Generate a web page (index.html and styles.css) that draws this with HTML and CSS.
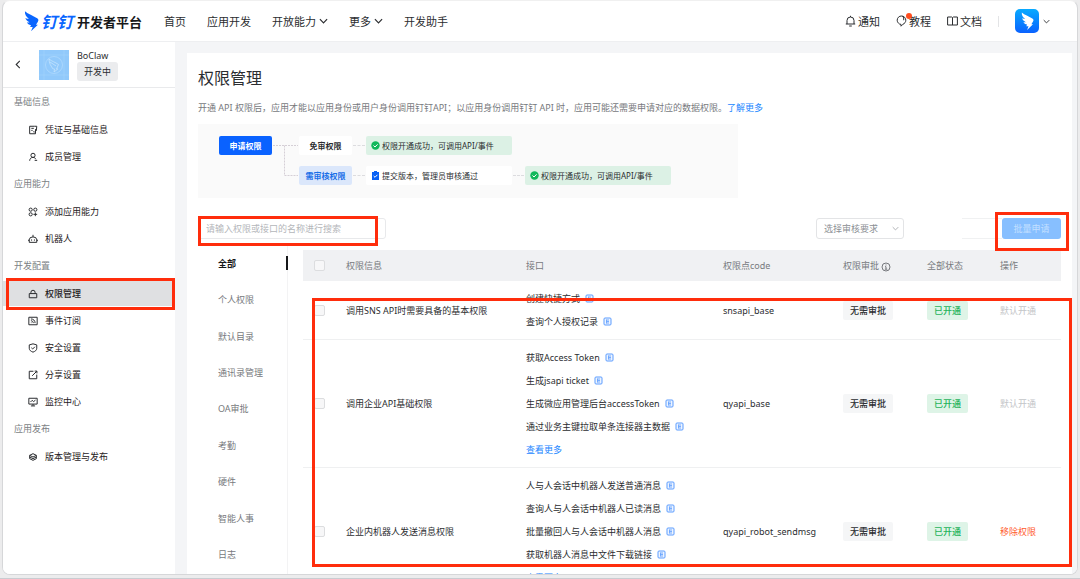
FILE: index.html
```html
<!DOCTYPE html>
<html lang="zh-CN">
<head>
<meta charset="UTF-8" />
<meta name="viewport" content="width=device-width, initial-scale=1" />
<title>权限管理 - 钉钉开发者平台</title>
<link rel="stylesheet" href="styles.css">
</head>
<body>

<!-- Shared icons -->
<svg class="sprite" aria-hidden="true">
  <symbol id="bird" viewBox="0 0 16 22">
    <path d="M1 .5C4.500 3.500 9.500 5 14 8c1.800 1.200 1.500 2.500.8 3.700L12.800 15h2L7.500 22l1.800-4.600H6.500l1-2C5.300 15 3.800 13.800 3 12.200c1 .3 2 .4 3 .2C3.600 11.300 2 9.700 1.400 7.700c1.300.6 2.600.9 3.800.9C2.500 6.600.6 4 1 .5z" fill="currentColor"/>
  </symbol>
  <symbol id="chevron" viewBox="0 0 10 6">
    <path d="M1 1l4 4 4-4" fill="none" stroke="currentColor" stroke-width="1.300"/>
  </symbol>
  <symbol id="doc" viewBox="0 0 9 9">
    <rect x="1" y="1" width="7" height="7" rx="1" fill="#edf4ff" stroke="#5c9dff"/>
    <path d="M3.500 2.500v4M3.500 3h2.500M3.500 4.500h2.500M3.500 6h2.500" fill="none" stroke="#5c9dff" stroke-width=".8"/>
  </symbol>
  <symbol id="check" viewBox="0 0 9 9">
    <circle cx="4.500" cy="4.500" r="4.200" fill="#12b85c"/>
    <path d="M2.500 4.500L4 6l2.600-2.700" fill="none" stroke="#fff" stroke-width="1"/>
  </symbol>
</svg>

<div class="window">
  <header class="topbar">
    <a class="brand" href="#">
      <svg class="brand-bird"><use href="#bird"/></svg>
      <span class="brand-name">钉钉</span>
      <span class="brand-sub">开发者平台</span>
    </a>
    <nav class="topnav">
      <a href="#">首页</a>
      <a href="#">应用开发</a>
      <a href="#">开放能力<svg class="chev"><use href="#chevron"/></svg></a>
      <a href="#">更多<svg class="chev"><use href="#chevron"/></svg></a>
      <a href="#">开发助手</a>
    </nav>
    <div class="tools">
      <a href="#">
        <svg class="tool-icon" viewBox="0 0 11 12"><path d="M.8 9h9.400M2 9V5.500a3.500 3.500 0 0 1 7 0V9M5.500 2V.8M4.200 11h2.600" /></svg>通知
      </a>
      <a href="#" class="has-dot">
        <svg class="tool-icon" viewBox="0 0 11 12"><path d="M3.500 9C2 8 1.200 6.700 1.200 5.200A4.200 4.200 0 0 1 5.500 1a4.200 4.200 0 0 1 4.300 4.200c0 2-1.200 3.300-2.800 4L5 11.200V9.400zM6.500 1.200c1.200 1 1.600 2.500 1 4"/></svg>教程
      </a>
      <a href="#">
        <svg class="tool-icon" viewBox="0 0 11 12"><path d="M.6 2h4l.9.6.9-.6h4v8H.6zM5.500 2.600V10"/></svg>文档
      </a>
      <span class="tools-line"></span>
      <button class="account" aria-label="账号">
        <span class="avatar"><svg><use href="#bird"/></svg></span>
        <svg class="chev-sm"><use href="#chevron"/></svg>
      </button>
    </div>
  </header>

  <div class="layout">
    <aside class="sidebar">
      <div class="app">
        <button class="back" aria-label="返回">
          <svg viewBox="0 0 6 10"><path d="M5 1L1 5l4 4" fill="none" stroke="currentColor" stroke-width="1.200"/></svg>
        </button>
        <div class="app-logo">
          <svg viewBox="0 0 30 30">
            <path d="M5 0v30M25 0v30M0 5h30M0 25h30" stroke="#a6d5fc" stroke-width=".6"/>
            <circle cx="15" cy="15" r="8.500" fill="none" stroke="#b3dbfd" stroke-width=".7"/>
            <path d="M10 9c3 2.500 6 3 9.500 5.500L17.500 19h1.300L15 22l.6-3h-1.400C12 16.500 10 13 10 9zM11 12l6 4" fill="none" stroke="#c4e3fd" stroke-width=".8"/>
          </svg>
        </div>
        <div class="app-info">
          <span class="app-name">BoClaw</span>
          <span class="app-state">开发中</span>
        </div>
      </div>

      <nav class="menu">
        <h2>基础信息</h2>
        <a href="#"><svg viewBox="0 0 12 12"><path d="M8 1.500H2v9h7V5M4 4h3M4 6.500h1.500M8 1.500h2.500L10 7M6.500 8h1v1"/></svg>凭证与基础信息</a>
        <a href="#"><svg viewBox="0 0 12 12"><circle cx="6" cy="4" r="2.500"/><path d="M2 10.500c.2-2.500 1.500-4 4-4 1.800 0 2.800.8 3.200 2M8 10h3"/></svg>成员管理</a>
        <h2>应用能力</h2>
        <a href="#"><svg viewBox="0 0 12 12"><circle cx="3.200" cy="3.200" r="1.900"/><circle cx="8.800" cy="3.200" r="1.900"/><circle cx="3.200" cy="8.800" r="1.900"/><path d="M8.800 6.500v4.500M6.500 8.800H11"/></svg>添加应用能力</a>
        <a href="#"><svg viewBox="0 0 12 12"><path d="M1.500 7a4.500 3.500 0 0 1 9 0v3h-9zM6 3.500V1M0 7.500h1.500M10.500 7.500H12M4.300 6.500v1.500M7.700 6.500v1.500"/></svg>机器人</a>
        <h2>开发配置</h2>
        <a href="#" class="active"><svg viewBox="0 0 12 12"><path d="M1.500 5.500h9v5h-9zM3.500 5.500V4a2.500 2.500 0 0 1 5 0v1.500"/></svg>权限管理<span class="mark mark-menu"></span></a>
        <a href="#"><svg viewBox="0 0 12 12"><path d="M1 1.500h10v9H1zM3.500 3.500c3 0 5 2 5 5M3.500 5.700c1.700 0 2.800 1.100 2.800 2.800M3.500 8h.6"/></svg>事件订阅</a>
        <a href="#"><svg viewBox="0 0 12 12"><path d="M6 1l4.500 1.300v4C10.500 8.800 8.500 10 6 11 3.500 10 1.500 8.800 1.500 6.300v-4zM4 5.700l1.600 1.500L8.300 4.500"/></svg>安全设置</a>
        <a href="#"><svg viewBox="0 0 12 12"><path d="M6.500 1.500h-5v9h9v-5M5 7l5.500-5.500M8 1.300h2.700V4"/></svg>分享设置</a>
        <a href="#"><svg viewBox="0 0 12 12"><path d="M1 1.500h10v7H1zM6 8.500v2M3.500 10.700h5M3 6l2-2 1.700 1.500L9 3.700"/></svg>监控中心</a>
        <h2>应用发布</h2>
        <a href="#"><svg viewBox="0 0 12 12"><path d="M6 2l4 2-4 2-4-2zM2 6l4 2 4-2M2 8l4 2 4-2M2 4v4M10 4v4"/></svg>版本管理与发布</a>
      </nav>
    </aside>

    <main class="content">
      <h1>权限管理</h1>
      <p class="desc">开通 API 权限后，应用才能以应用身份或用户身份调用钉钉API；以应用身份调用钉钉 API 时，应用可能还需要申请对应的数据权限。<a href="#">了解更多</a></p>

      <!-- Application flow -->
      <section class="flow">
        <span class="node node-start">申请权限</span>
        <svg class="elbow" viewBox="0 0 27 49" preserveAspectRatio="none"><path d="M1 9.500h25M12.500 9.500v30H26"/></svg>
        <span class="node">免审权限</span>
        <i class="dash"></i>
        <span class="node node-text node-done"><svg><use href="#check"/></svg>权限开通成功，可调用API/事件</span>
        <span class="node node-review">需审核权限</span>
        <i class="dash"></i>
        <span class="node node-text"><svg viewBox="0 0 9 9"><path d="M1 1h7v8H1zM3 0h3v2H3z" fill="#0a62f5"/><path d="M2.700 5L4 6.300l2.400-2.500" fill="none" stroke="#fff"/></svg>提交版本，管理员审核通过</span>
        <i class="dash"></i>
        <span class="node node-text node-done"><svg><use href="#check"/></svg>权限开通成功，可调用API/事件</span>
      </section>

      <form class="filters">
        <div class="search">
          <input type="text" placeholder="请输入权限或接口的名称进行搜索" aria-label="搜索权限或接口">
          <span class="mark mark-search"></span>
        </div>
        <div class="select">
          <select aria-label="审核要求"><option>选择审核要求</option></select>
          <svg class="chev-sm"><use href="#chevron"/></svg>
        </div>
        <input type="text" class="extra" aria-label="其他条件">
        <div class="apply">
          <button type="button" disabled>批量申请</button>
          <span class="mark mark-apply"></span>
        </div>
      </form>

      <div class="panel">
        <nav class="cats">
          <a href="#" class="current">全部</a>
          <a href="#">个人权限</a>
          <a href="#">默认目录</a>
          <a href="#">通讯录管理</a>
          <a href="#">OA审批</a>
          <a href="#">考勤</a>
          <a href="#">硬件</a>
          <a href="#">智能人事</a>
          <a href="#">日志</a>
        </nav>

        <div class="table-wrap">
          <table>
            <colgroup>
              <col class="c-check"><col class="c-name"><col><col class="c-code"><col class="c-audit"><col class="c-state"><col class="c-op">
            </colgroup>
            <thead>
              <tr>
                <th><input type="checkbox" aria-label="全选"></th>
                <th>权限信息</th>
                <th>接口</th>
                <th>权限点code</th>
                <th>权限审批 <svg class="info" viewBox="0 0 10 10"><circle cx="5" cy="5" r="4"/><path d="M5 2.500v1M4 4.700h1v2.500M3.800 7.200h2.500"/></svg></th>
                <th>全部状态</th>
                <th>操作</th>
              </tr>
            </thead>
            <tbody>
              <tr>
                <td><input type="checkbox" aria-label="调用SNS API时需要具备的基本权限"></td>
                <td>调用SNS API时需要具备的基本权限</td>
                <td>
                  <ul>
                    <li>创建快捷方式<svg><use href="#doc"/></svg></li>
                    <li>查询个人授权记录<svg><use href="#doc"/></svg></li>
                  </ul>
                </td>
                <td>snsapi_base</td>
                <td><span class="tag">无需审批</span></td>
                <td><span class="tag tag-on">已开通</span></td>
                <td class="muted">默认开通</td>
              </tr>
              <tr>
                <td><input type="checkbox" aria-label="调用企业API基础权限"></td>
                <td>调用企业API基础权限</td>
                <td>
                  <ul>
                    <li>获取Access Token<svg><use href="#doc"/></svg></li>
                    <li>生成jsapi ticket<svg><use href="#doc"/></svg></li>
                    <li>生成微应用管理后台accessToken<svg><use href="#doc"/></svg></li>
                    <li>通过业务主键拉取单条连接器主数据<svg><use href="#doc"/></svg></li>
                    <li><a href="#">查看更多</a></li>
                  </ul>
                </td>
                <td>qyapi_base</td>
                <td><span class="tag">无需审批</span></td>
                <td><span class="tag tag-on">已开通</span></td>
                <td class="muted">默认开通</td>
              </tr>
              <tr>
                <td><input type="checkbox" aria-label="企业内机器人发送消息权限"></td>
                <td>企业内机器人发送消息权限</td>
                <td>
                  <ul>
                    <li>人与人会话中机器人发送普通消息<svg><use href="#doc"/></svg></li>
                    <li>查询人与人会话中机器人已读消息<svg><use href="#doc"/></svg></li>
                    <li>批量撤回人与人会话中机器人消息<svg><use href="#doc"/></svg></li>
                    <li>获取机器人消息中文件下载链接<svg><use href="#doc"/></svg></li>
                    <li><a href="#">查看更多</a></li>
                  </ul>
                </td>
                <td>qyapi_robot_sendmsg</td>
                <td><span class="tag">无需审批</span></td>
                <td><span class="tag tag-on">已开通</span></td>
                <td><a href="#" class="remove">移除权限</a></td>
              </tr>
            </tbody>
          </table>
        </div>
        <span class="mark mark-table"></span>
      </div>
    </main>
  </div>
</div>

</body>
</html>
```
FILE: styles.css
```css
* {
  box-sizing: border-box;
}

body {
  margin: 0;
  height: 100vh;
  padding: 0 2px 3px;
  background: #ececed;
  border-bottom: 1px solid #c9ccd1;
  font-family: "Noto Sans", "Noto Sans CJK SC", sans-serif;
  font-size: 9px;
  color: #2b2d30;
  overflow: hidden;
}

a {
  color: #1a86ff;
  text-decoration: none;
}

button, input, select {
  font: inherit;
  margin: 0;
}

button {
  padding: 0;
  border: none;
  background: none;
  color: inherit;
}

.sprite {
  position: absolute;
  width: 0;
  height: 0;
}

.window {
  display: flex;
  flex-direction: column;
  height: 100%;
  border: 1px solid #d6d7d9;
  border-top-color: #f0f0f0;
  border-radius: 8px;
  background: #fff;
  overflow: hidden;
}

/* Header */
.topbar {
  display: flex;
  align-items: center;
  flex: none;
  height: 41px;
  padding: 0 27px 0 21px;
  border-bottom: 1px solid #eeeff1;
  font-size: 11px;
}

.brand {
  display: flex;
  align-items: center;
  font-family: "Noto Sans CJK SC", sans-serif;
  font-weight: 700;
  width: 140px;
}

.brand-bird {
  width: 15px;
  height: 22px;
  margin-right: 2px;
  color: #0a66ff;
}

.brand-name {
  font-size: 16px;
  font-style: italic;
  color: #0a66ff;
}

.brand-sub {
  margin-left: 4px;
  font-size: 13px;
  color: #17181a;
  white-space: nowrap;
}

.topnav {
  display: flex;
  gap: 21px;
}

.topnav a, .tools a {
  display: flex;
  align-items: center;
  color: #2b2d30;
}

.chev {
  width: 9px;
  height: 6px;
  margin-left: 3px;
}

.chev-sm {
  width: 7px;
  height: 5px;
}

.tools {
  display: flex;
  align-items: center;
  gap: 16px;
  margin-left: auto;
}

.tool-icon {
  width: 11px;
  height: 12px;
  margin-right: 2px;
  fill: none;
  stroke: #2b2d30;
}

.has-dot {
  position: relative;
}

.has-dot::after {
  content: "";
  position: absolute;
  top: 0;
  left: 10px;
  width: 6px;
  height: 6px;
  border-radius: 50%;
  background: #ff4d1f;
}

.tools-line {
  width: 1px;
  height: 11px;
  background: #e3e4e6;
}

.account {
  display: flex;
  align-items: center;
  gap: 4px;
}

.avatar {
  display: flex;
  align-items: center;
  justify-content: center;
  width: 24px;
  height: 24px;
  border-radius: 5px;
  background: linear-gradient(#08aaff, #0a62ff);
  color: #fff;
}

.avatar svg {
  width: 13px;
  height: 18px;
}

/* Sidebar */
.layout {
  display: flex;
  flex: 1;
  min-height: 0;
  background: #f4f5f7;
}

.sidebar {
  flex: none;
  width: 172px;
  background: #fff;
}

.app {
  display: flex;
  align-items: center;
  height: 46px;
  padding: 0 12px;
  border-bottom: 1px solid #e9eaec;
}

.back {
  display: flex;
  width: 24px;
}

.back svg {
  width: 6px;
  height: 9px;
}

.app-logo {
  width: 30px;
  height: 30px;
  background: #91c9fb;
}

.app-logo svg {
  display: block;
}

.app-info {
  display: flex;
  flex-direction: column;
  align-items: flex-start;
  margin-left: 8px;
}

.app-name {
  line-height: 13px;
}

.app-state {
  padding: 0 7px;
  border-radius: 3px;
  background: #ebecee;
  line-height: 19px;
}

.menu {
  display: flex;
  flex-direction: column;
}

.menu h2 {
  margin: 0;
  padding-left: 11px;
  font-size: 9px;
  font-weight: 400;
  line-height: 28px;
  color: #7c7f84;
}

.menu a {
  display: flex;
  align-items: center;
  gap: 6px;
  position: relative;
  height: 25px;
  margin: 1px 0;
  padding-left: 24px;
  color: #1f2123;
}

.menu svg {
  width: 12px;
  height: 12px;
  padding: 1px;
  fill: none;
  stroke: #2b2d30;
  stroke-width: 1.2;
}

.menu .active {
  background: #dfe0e2;
  font-weight: 500;
}

/* Red call-out frames */
.mark {
  position: absolute;
  z-index: 1;
  border: 3px solid #ff2d0c;
  pointer-events: none;
}

.mark-menu {
  inset: -3px 0 -4px 3px;
}

.mark-search {
  inset: -2px 8px -7px 0;
}

.mark-apply {
  inset: -6px -8px -12px -7px;
}

.mark-table {
  inset: 53px -11px 7px 114px;
}

/* Content */
.content {
  display: flex;
  flex-direction: column;
  flex: 1;
  min-width: 0;
  margin: 11px 5px 0 12px;
  padding: 14px 11px 0;
  background: #fff;
}

h1 {
  margin: 0;
  font-size: 16px;
  font-weight: 400;
  line-height: 22px;
  color: #2b2d30;
}

.desc {
  margin: 11px 0 9px;
  line-height: 15px;
  color: #77797d;
}

.flow {
  display: grid;
  grid-template-columns: 53px 27px 53px 14px 146px 13px 146px;
  grid-template-rows: 19px 19px;
  row-gap: 11px;
  flex: none;
  width: 540px;
  padding: 12px 21px 13px;
  background: #fafafa;
  font-size: 8px;
}

.node {
  border-radius: 2px;
  background: #fff;
  font-weight: 700;
  line-height: 19px;
  text-align: center;
  white-space: nowrap;
}

.node-start {
  background: #0a62ff;
  color: #fff;
}

.node-review {
  grid-column: 3;
  background: #dbe7fb;
  color: #1a6fe8;
}

.node-text {
  display: flex;
  align-items: center;
  gap: 2px;
  padding-left: 5px;
  font-weight: 400;
}

.node-text svg {
  width: 9px;
  height: 9px;
}

.node-done {
  background: #dcf1e5;
}

.elbow {
  grid-row: 1 / 3;
  grid-column: 2;
  width: 27px;
  height: 49px;
  fill: none;
  stroke: #d5cfd6;
  stroke-dasharray: 2 1;
}

.dash {
  align-self: center;
  margin: 0 1px;
  border-top: 1px dashed #dcdcdf;
}

/* Filters */
.filters {
  display: flex;
  flex: none;
  height: 21px;
  margin: 20px 0 6px;
}

.search {
  position: relative;
  width: 188px;
  margin-right: auto;
}

.search input {
  width: 100%;
  height: 100%;
  padding: 0 7px;
  border: 1px solid #e8e9eb;
  border-radius: 3px;
}

.search input::placeholder {
  color: #b4b6ba;
}

.select {
  position: relative;
  width: 88px;
}

.select select {
  width: 100%;
  height: 100%;
  padding: 0 7px;
  appearance: none;
  border: 1px solid #e3e4e6;
  border-radius: 3px;
  background: #fff;
  color: #8c8f94;
}

.select svg {
  position: absolute;
  top: 8px;
  right: 5px;
  color: #a9abaf;
}

.extra {
  width: 40px;
  margin-left: 58px;
  border: 1px solid #f0f1f2;
  border-left: none;
  border-right: none;
}

.apply {
  position: relative;
  width: 59px;
}

.apply button {
  width: 100%;
  height: 100%;
  border-radius: 3px;
  background: #87bfff;
  color: #c3dfff;
}

/* Categories and table */
.panel {
  display: flex;
  flex: 1;
  position: relative;
  min-height: 0;
}

.cats {
  display: flex;
  flex-direction: column;
  flex: none;
  width: 90px;
  padding-bottom: 1px;
  border-right: 1px solid #f3f3f4;
}

.cats a {
  display: flex;
  align-items: center;
  flex: 1;
  padding-left: 20px;
  color: #77797d;
}

.cats .current {
  position: relative;
  font-weight: 700;
  color: #17181a;
}

.current::after {
  content: "";
  position: absolute;
  right: -1px;
  width: 2px;
  height: 14px;
  background: #17181a;
}

.table-wrap {
  flex: 1;
  min-width: 0;
  margin: 5px 0 0 15px;
  overflow: hidden;
}

table {
  width: 100%;
  table-layout: fixed;
  border-collapse: separate;
  border-spacing: 0;
}

.c-check { width: 43px; }
.c-name { width: 180px; }
.c-code { width: 120px; }
.c-audit { width: 84px; }
.c-state { width: 73px; }
.c-op { width: 61px; }

th, td {
  padding: 0;
  text-align: left;
  white-space: nowrap;
}

th {
  height: 31px;
  background: #f0f1f3;
  font-weight: 400;
  color: #77797d;
}

th:first-child, td:first-child {
  padding-left: 11px;
}

td {
  padding: 6px 0;
  border-bottom: 1px solid #eff0f1;
}

input[type="checkbox"] {
  display: block;
  appearance: none;
  width: 11px;
  height: 11px;
  border: 1px solid #dcdddf;
  border-radius: 2px;
  background: #f7f7f8;
}

ul {
  margin: 0;
  padding: 0;
  list-style: none;
}

li {
  display: flex;
  align-items: center;
  gap: 5px;
  height: 23px;
}

li svg {
  width: 9px;
  height: 9px;
}

.info {
  width: 10px;
  height: 10px;
  vertical-align: middle;
  fill: none;
  stroke: #77797d;
}

.tag {
  display: inline-block;
  padding: 0 7px;
  border-radius: 2px;
  background: #f5f6f7;
  font-weight: 500;
  line-height: 19px;
}

.tag-on {
  background: #def4e7;
  color: #1fb35b;
}

.muted {
  color: #c3c5c8;
}

.remove {
  color: #ff5a2b;
}
```
